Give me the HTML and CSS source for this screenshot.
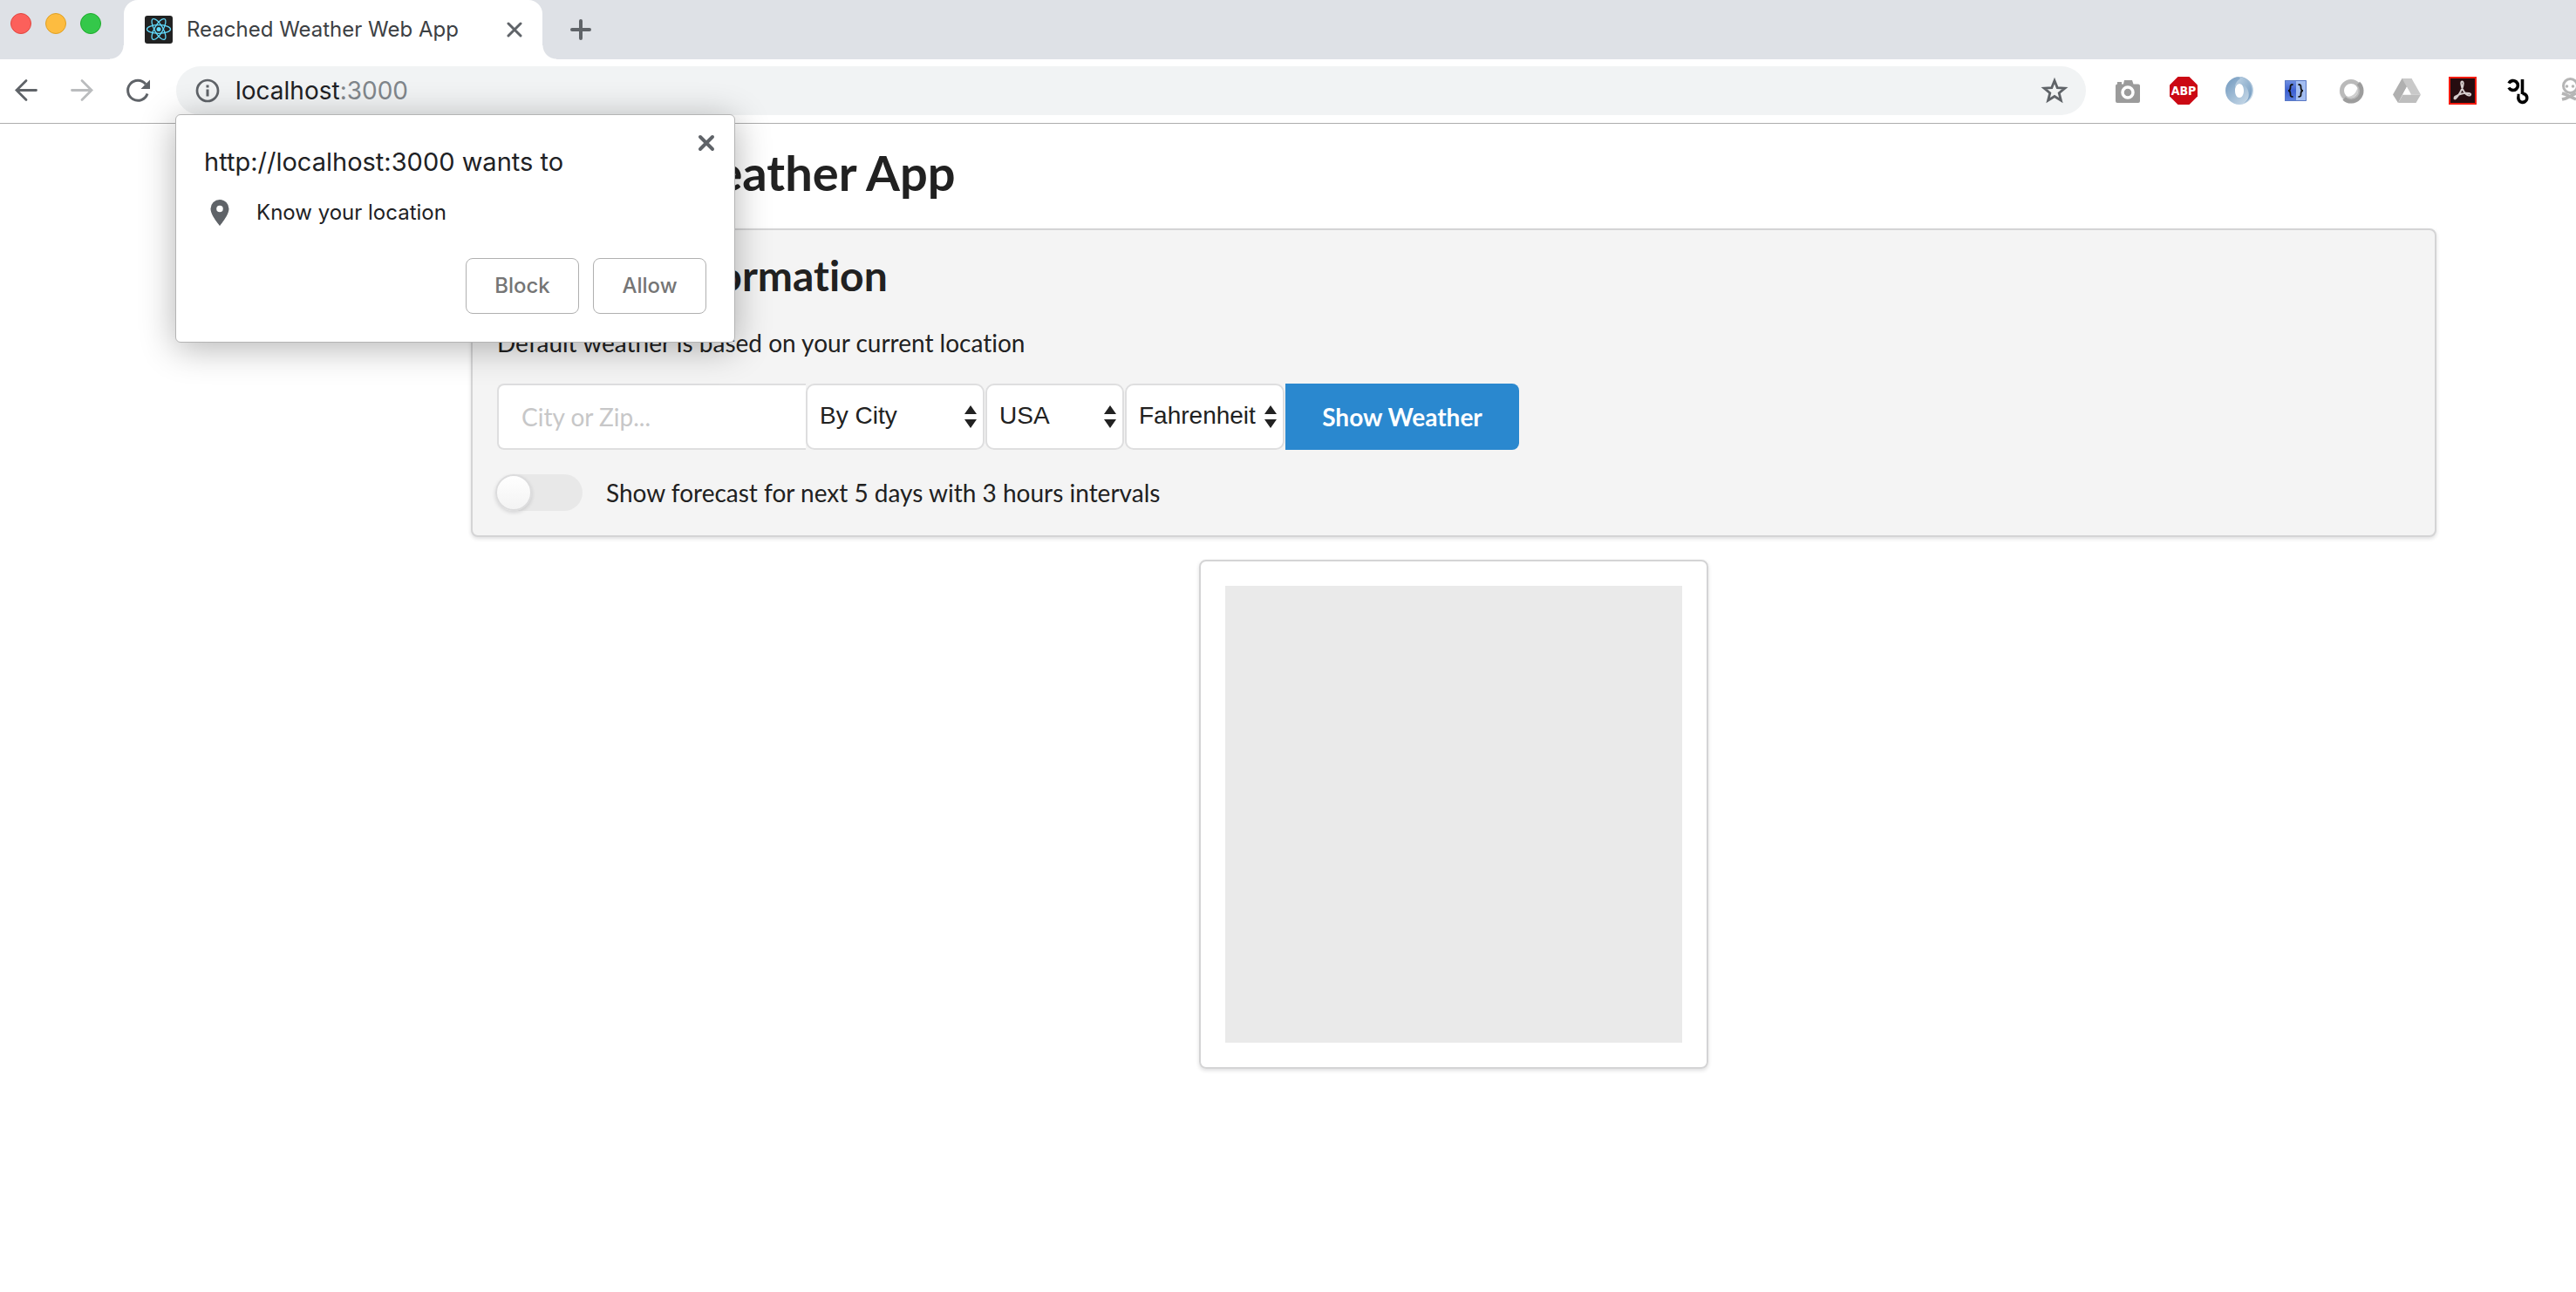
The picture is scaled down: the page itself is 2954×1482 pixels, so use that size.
FILE: index.html
```html
<!DOCTYPE html>
<html lang="en">
<head>
<meta charset="utf-8">
<title>Reached Weather Web App</title>
<link rel="stylesheet" href="styles.css">
</head>
<body>
<header class="browser">
  <div class="tab-strip">
    <div class="window-controls">
      <button class="light light-close" aria-label="Close window"></button>
      <button class="light light-minimize" aria-label="Minimize window"></button>
      <button class="light light-zoom" aria-label="Zoom window"></button>
    </div>
    <div class="tab">
      <svg class="favicon" viewBox="0 0 32 32" aria-hidden="true">
        <rect width="32" height="32" rx="3" fill="#222"/>
        <g fill="none" stroke="#61dafb" stroke-width="1.3">
          <ellipse cx="16" cy="15.500" rx="13.5" ry="4.800"/>
          <ellipse cx="16" cy="15.500" rx="13.5" ry="4.800" transform="rotate(60 16 15.500)"/>
          <ellipse cx="16" cy="15.500" rx="13.5" ry="4.800" transform="rotate(120 16 15.500)"/>
        </g>
        <circle cx="16" cy="15.500" r="2.500" fill="#61dafb"/>
      </svg>
      <span class="tab-title">Reached Weather Web App</span>
      <button class="icon-button" aria-label="Close tab">
        <svg width="18" height="18" viewBox="0 0 18 18"><path d="M2 2l14 14M16 2L2 16" stroke="#5f6368" stroke-width="3" stroke-linecap="round"/></svg>
      </button>
    </div>
    <button class="icon-button new-tab" aria-label="New tab">
      <svg width="26" height="26" viewBox="0 0 26 26"><path d="M13 3v20M3 13h20" stroke="#5f6368" stroke-width="4" stroke-linecap="round"/></svg>
    </button>
  </div>
  <div class="toolbar">
    <nav class="nav-buttons">
      <button class="icon-button" aria-label="Back">
        <svg width="32" height="32" viewBox="0 0 32 32"><path d="M27.500 15.500H5M16 4.500l-11 11 11 11" fill="none" stroke="#5f6368" stroke-width="2.800" stroke-linecap="round"/></svg>
      </button>
      <button class="icon-button" aria-label="Forward">
        <svg width="32" height="32" viewBox="0 0 32 32"><path d="M4.500 15.500H27M16 4.500l11 11-11 11" fill="none" stroke="#babcbe" stroke-width="2.800" stroke-linecap="round"/></svg>
      </button>
      <button class="icon-button" aria-label="Reload">
        <svg width="32" height="32" viewBox="0 0 32 32"><path d="M27 19.500A11.500 11.500 0 1 1 25 8.500" fill="none" stroke="#5f6368" stroke-width="3"/><path d="M30 3.500v10.500H19.500z" fill="#5f6368"/></svg>
      </button>
    </nav>
    <div class="omnibox">
      <svg class="info" viewBox="0 0 28 28" aria-hidden="true"><circle cx="14" cy="14" r="12" fill="none" stroke="#5f6368" stroke-width="2.700"/><path d="M14 12.500v8M14 7.500v3" stroke="#5f6368" stroke-width="3"/></svg>
      <span class="url">localhost<span class="port">:3000</span></span>
      <button class="icon-button star" aria-label="Bookmark this page">
        <svg width="32" height="32" viewBox="0 0 32 32"><path d="M16 4.500l3.200 8.100 8.700.500-6.700 5.600 2.200 8.500-7.400-4.700-7.400 4.700 2.200-8.500-6.700-5.600 8.700-.500z" fill="none" stroke="#5f6368" stroke-width="2.800"/></svg>
      </button>
    </div>
    <div class="extensions">
      <svg viewBox="0 0 32 32"><path d="M4 8.500V6h5v2.500h2L12 4h9l1.500 4.500H28a2 2 0 0 1 2 2V28a2 2 0 0 1-2 2H4a2 2 0 0 1-2-2V10.500a2 2 0 0 1 2-2z" fill="#9b9b9b"/><circle cx="16" cy="18" r="6" fill="#9b9b9b" stroke="#fff" stroke-width="3.500"/></svg>
      <svg viewBox="0 0 32 32"><path d="M9.500 0h13L32 9.500v13L22.500 32h-13L0 22.500v-13z" fill="#cb0914"/><text x="16" y="21" class="abp">ABP</text></svg>
      <svg viewBox="0 0 32 32"><defs><linearGradient id="ring" x1="0" y1="0" x2="1" y2="1"><stop offset="0" stop-color="#c3d6e6"/><stop offset="1" stop-color="#6d96bd"/></linearGradient><linearGradient id="ring2" x1="0" y1="0" x2="1" y2="1"><stop offset="0" stop-color="#6f97bd"/><stop offset="1" stop-color="#d3e2ee"/></linearGradient></defs><path d="M16 0a16 16 0 1 0 0 32 16 16 0 0 0 0-32zm0 8c3 0 5 3.500 5 8s-2 8-5 8-5-3.500-5-8 2-8 5-8z" fill="url(#ring2)" fill-rule="evenodd"/><path d="M14 0a16 16 0 0 1 6 31c6-3 8-9 6-15-1.500-5-5-8-10-8-2 0-4 2-5 5 0-5 2-8 5-10 2-1 0-3-2-3z" fill="url(#ring)"/></svg>
      <svg viewBox="0 0 32 32"><defs><linearGradient id="cell" x1="0" y1="0" x2="0" y2="1"><stop offset="0" stop-color="#7292e2"/><stop offset=".5" stop-color="#3c5fd2"/><stop offset="1" stop-color="#5c82df"/></linearGradient></defs><path d="M4 4h13v24H4z" fill="url(#cell)"/><path d="M17 4h12v24H17z" fill="#a3bdf0"/><path d="M4.500 4.500h24v23h-24z" fill="none" stroke="#5a78c5"/><path d="M13.500 9c-3 0-3 1-3 3s0 4-2.500 4c2.500 0 2.500 2 2.500 4s0 3 3 3M19.500 9c3 0 3 1 3 3s0 4 2.500 4c-2.500 0-2.500 2-2.500 4s0 3-3 3" fill="none" stroke="#111" stroke-width="1.800"/></svg>
      <svg viewBox="0 0 32 32"><circle cx="16" cy="17.500" r="13.500" fill="#f2f2f2"/><circle cx="16" cy="16" r="10.500" fill="#fff" stroke="#bababa" stroke-width="5"/><path d="M24.500 7.500A12 12 0 0 1 8 25" fill="none" stroke="#9d9d9d" stroke-width="4.500"/><path d="M23.500 12.500a8.500 8.500 0 0 1-13 10c7 1 11-3 13-10z" fill="#cfcfcf"/></svg>
      <svg viewBox="0 0 32 32"><path d="M10.500 2h11l-5.500 9.300L6 30 0 20.500z" fill="#b0b0b0"/><path d="M10.500 2h11L32 20.500H21z" fill="#c9c9c9"/><path d="M11.500 20.500H32L26.500 30H6z" fill="#bebebe"/><path d="M16 12l4.800 8.500h-9.600z" fill="#fff"/></svg>
      <svg viewBox="0 0 32 32"><path d="M1 1h30v30H1z" fill="#260d10" stroke="#f31b10" stroke-width="2"/><path d="M14.500 6c1-1.500 3 0 2 3.500-.500 5-6 13-8.500 15.500-2 1.500-2-1.500 0-2.500 4-2.500 11-4 15.500-3.500 2.500.500 2 3-.500 2.500-4-.500-8-7.500-8.500-12-.500-2-.500-2.500 0-3.500z" fill="none" stroke="#d5cccc" stroke-width="2"/></svg>
      <svg viewBox="0 0 32 32"><path d="M5 7.500a5.500 5.500 0 1 1 0 5M20.500 3v17M14.500 21.500h3M16 23a5 5 0 1 0 6-3.500h-1.500" fill="none" stroke="#000" stroke-width="3.600"/></svg>
      <svg viewBox="0 0 32 32"><circle cx="11.500" cy="10.500" r="8" fill="#fff" stroke="#b5b5b5" stroke-width="3"/><circle cx="7.500" cy="11" r="1.800" fill="#b5b5b5"/><circle cx="14.500" cy="11" r="1.800" fill="#b5b5b5"/><path d="M2 19l3 1 13 6M2 26l4-1 12-6" fill="none" stroke="#b5b5b5" stroke-width="3.500"/></svg>
    </div>
  </div>
</header>

<main class="page">
  <h1 class="page-title">Reached Weather App</h1>
  <section class="segment search">
    <h2 class="segment-title">Weather Information</h2>
    <p class="hint">Default weather is based on your current location</p>
    <form class="search-form">
      <input class="query" type="text" placeholder="City or Zip..." aria-label="City or zip">
      <div class="select select-by">
        <select aria-label="Search by"><option>By City</option><option>By Zip</option></select>
        <svg class="arrows" viewBox="0 0 14 26" aria-hidden="true"><path d="M7 0l7 10H0zM7 26l7-10H0z" fill="#222"/></svg>
      </div>
      <div class="select select-country">
        <select aria-label="Country"><option>USA</option></select>
        <svg class="arrows" viewBox="0 0 14 26" aria-hidden="true"><path d="M7 0l7 10H0zM7 26l7-10H0z" fill="#222"/></svg>
      </div>
      <div class="select select-unit">
        <select aria-label="Units"><option>Fahrenheit</option><option>Celsius</option></select>
        <svg class="arrows" viewBox="0 0 14 26" aria-hidden="true"><path d="M7 0l7 10H0zM7 26l7-10H0z" fill="#222"/></svg>
      </div>
      <button class="submit" type="button">Show Weather</button>
    </form>
    <label class="toggle">
      <input class="toggle-input" type="checkbox">
      <span>Show forecast for next 5 days with 3 hours intervals</span>
    </label>
  </section>
  <section class="segment result">
    <div class="placeholder"></div>
  </section>
</main>

<div class="permission" role="dialog" aria-labelledby="permission-title">
  <div class="permission-head">
    <p class="permission-title" id="permission-title">http://localhost:3000 wants to</p>
    <button class="icon-button permission-close" aria-label="Dismiss">
      <svg width="20" height="20" viewBox="0 0 20 20"><path d="M3 3l14 14M17 3L3 17" stroke="#5f6368" stroke-width="4" stroke-linecap="round"/></svg>
    </button>
  </div>
  <div class="permission-item">
    <svg class="pin" viewBox="0 0 22 30" aria-hidden="true"><path d="M11 0A10.500 10.500 0 0 0 .500 10.500C.500 18 11 30 11 30s10.500-12 10.500-19.500A10.500 10.500 0 0 0 11 0zm0 14.300a3.800 3.800 0 1 1 0-7.600 3.800 3.800 0 0 1 0 7.600z" fill="#5f6368"/></svg>
    <span>Know your location</span>
  </div>
  <div class="permission-actions">
    <button class="choice">Block</button>
    <button class="choice">Allow</button>
  </div>
</div>
</body>
</html>
```
FILE: styles.css
```css
*,
*::before,
*::after {
  box-sizing: border-box;
}

body {
  margin: 0;
  background: #fff;
  color: #212121;
  font-family: Lato, "Liberation Sans", sans-serif;
  font-size: 28px;
  font-variant-ligatures: none;
  line-height: 40px;
  overflow-x: hidden;
}

button {
  font: inherit;
  cursor: pointer;
}

svg {
  display: block;
}

/* Browser window */
.browser,
.permission {
  font-family: Inter, "Liberation Sans", sans-serif;
}

.browser {
  overflow: hidden;
  border-bottom: 1px solid #adadad;
}

.tab-strip {
  display: flex;
  height: 68px;
  background: #dee1e6;
}

.window-controls {
  display: flex;
  gap: 16px;
  width: 142px;
  padding: 15px 0 0 12px;
}

.light {
  width: 24px;
  height: 24px;
  padding: 0;
  border: 1px solid;
  border-radius: 50%;
}

.light-close {
  background: #fc605b;
  border-color: #e2463f;
}

.light-minimize {
  background: #fdbc40;
  border-color: #dfa023;
}

.light-zoom {
  background: #34c84a;
  border-color: #1dac2b;
}

.tab {
  position: relative;
  display: flex;
  align-items: center;
  width: 480px;
  padding: 0 22px 0 24px;
  background: #fff;
  border-radius: 16px 16px 0 0;
}

.tab::before,
.tab::after {
  content: "";
  position: absolute;
  bottom: 0;
  width: 16px;
  height: 16px;
}

.tab::before {
  right: 100%;
  background: radial-gradient(circle at 0 0, #dee1e6 15px, #fff 16px);
}

.tab::after {
  left: 100%;
  background: radial-gradient(circle at 100% 0, #dee1e6 15px, #fff 16px);
}

.favicon {
  width: 32px;
  height: 32px;
  margin-right: 16px;
}

.tab-title {
  flex: 1;
  color: #3c4043;
  font-size: 24px;
  white-space: nowrap;
}

.icon-button {
  display: flex;
  padding: 0;
  border: 0;
  background: none;
}

.tab .icon-button {
  padding: 1px;
}

.new-tab {
  align-items: center;
  margin-left: 31px;
}

.toolbar {
  display: flex;
  align-items: center;
  height: 73px;
  padding: 0 0 1px 14px;
}

.nav-buttons {
  display: flex;
  gap: 32px;
  width: 188px;
}

.omnibox {
  display: flex;
  flex: 1;
  align-items: center;
  height: 56px;
  padding: 0 20px 0 22px;
  border-radius: 28px;
  background: #f1f3f4;
}

.info {
  width: 28px;
  height: 28px;
  margin-right: 18px;
}

.url {
  flex: 1;
  color: #202124;
}

.port {
  color: #80868b;
}

.extensions {
  display: flex;
  gap: 32px;
  width: 562px;
  padding-left: 32px;
}

.extensions svg {
  flex: none;
  width: 32px;
  height: 32px;
}

.abp {
  fill: #fff;
  font: bold 14px "DejaVu Sans Condensed", "Open Sans", sans-serif;
  text-anchor: middle;
}

/* Weather page */
.page {
  padding: 20px 160px 40px 540px;
}

.page-title,
.segment-title {
  margin: 0;
  font-weight: 700;
}

.page-title {
  font-size: 56px;
  line-height: 72px;
}

.segment {
  border: 2px solid #d4d4d5;
  border-radius: 8px;
  box-shadow: 0 2px 4px rgba(34, 36, 38, .15);
  padding: 28px;
}

.search {
  margin-top: 28px;
  background: #f4f4f4;
}

.segment-title {
  font-size: 48px;
  line-height: 48px;
}

.hint {
  margin: 33px 0 27px;
}

.search-form {
  display: flex;
  height: 76px;
}

.query {
  width: 354px;
  padding: 0 28px 0 26px;
  border: 2px solid #dededf;
  border-right: 0;
  border-radius: 8px 0 0 8px;
  background: #fff;
  color: inherit;
  font: inherit;
}

.query::placeholder {
  color: #c7c7c8;
  opacity: 1;
}

.select {
  display: grid;
  align-items: center;
  margin-right: 1px;
}

.select select,
.arrows {
  grid-area: 1 / 1;
}

.select select {
  appearance: none;
  width: 100%;
  height: 76px;
  padding: 0 14px 4px;
  border: 2px solid #dededf;
  border-radius: 10px;
  background: #fff;
  color: #212121;
  font-family: "Liberation Sans", sans-serif;
  font-size: 28px;
}

.arrows {
  justify-self: end;
  width: 14px;
  height: 26px;
  margin-right: 9px;
  pointer-events: none;
}

.select-by {
  width: 205px;
}

.select-country {
  width: 159px;
}

.select-unit {
  width: 183px;
}

.submit {
  width: 268px;
  border: 0;
  border-radius: 0 8px 8px 0;
  background: #2a88cf;
  color: #fff;
  font-weight: 700;
}

.toggle {
  display: flex;
  align-items: center;
  gap: 27px;
  height: 42px;
  margin-top: 28px;
}

.toggle-input {
  appearance: none;
  width: 98px;
  height: 42px;
  margin: 0;
  border-radius: 21px;
  background: #e8e8e8;
}

.toggle-input::before {
  content: "";
  display: block;
  width: 42px;
  height: 42px;
  margin-left: -2px;
  border: 2px solid #dcdcdd;
  border-radius: 50%;
  background: linear-gradient(#fff, #f3f3f3);
  box-shadow: 0 2px 4px rgba(34, 36, 38, .15);
}

.result {
  width: 584px;
  margin: 26px auto 0;
}

.placeholder {
  aspect-ratio: 1;
  background: #eaeaea;
}

/* Location prompt, floating over the page */
.permission {
  position: absolute;
  top: 131px;
  left: 201px;
  width: 642px;
  padding: 22px 32px 32px;
  border: 1px solid #b4b4b4;
  border-radius: 6px;
  background: #fff;
  box-shadow: 0 6px 40px rgba(0, 0, 0, .3);
  color: #202124;
}

.permission-head {
  display: flex;
  align-items: flex-start;
  justify-content: space-between;
}

.permission-title {
  margin: 12px 0 0;
  font-size: 29px;
}

.permission-close {
  margin-right: -10px;
}

.permission-item {
  display: flex;
  align-items: center;
  gap: 31px;
  margin: 18px 0 32px 7px;
  font-size: 24px;
}

.pin {
  width: 22px;
  height: 30px;
}

.permission-actions {
  display: flex;
  justify-content: flex-end;
  gap: 16px;
}

.choice {
  width: 130px;
  height: 64px;
  border: 1px solid #b0b0b0;
  border-radius: 8px;
  background: #fff;
  color: #757575;
  font-size: 24px;
  font-weight: 500;
}
```
